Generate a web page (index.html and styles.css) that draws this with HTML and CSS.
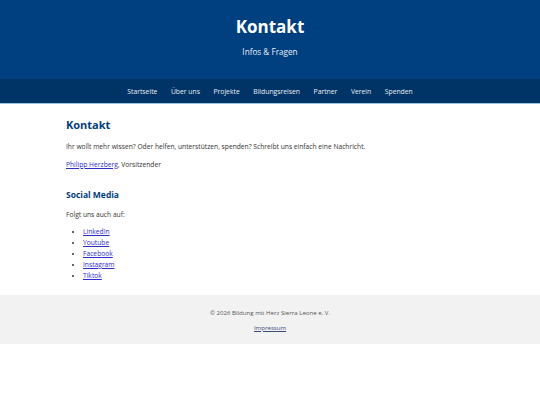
FILE: index.html
```html
<!DOCTYPE html>
<html lang="de">
<head>
<meta charset="utf-8">
<title>Kontakt</title>
<link rel="stylesheet" href="styles.css">
</head>
<body>
<header class="site-header">
  <h1 class="site-title">Kontakt</h1>
  <p class="site-subtitle">Infos &amp; Fragen</p>
</header>
<nav class="main-nav">
  <a href="#">Startseite</a>
  <a href="#">Über uns</a>
  <a href="#">Projekte</a>
  <a href="#">Bildungsreisen</a>
  <a href="#">Partner</a>
  <a href="#">Verein</a>
  <a href="#">Spenden</a>
</nav>
<main class="content">
  <h2 class="section-title">Kontakt</h2>
  <p>Ihr wollt mehr wissen? Oder helfen, unterstützen, spenden? Schreibt uns einfach eine Nachricht.</p>
  <p><a href="#">Philipp Herzberg</a>, Vorsitzender</p>
  <h3 class="sub-title">Social Media</h3>
  <p class="lead-in">Folgt uns auch auf:</p>
  <ul class="social-list">
    <li><a href="#">LinkedIn</a></li>
    <li><a href="#">Youtube</a></li>
    <li><a href="#">Facebook</a></li>
    <li><a href="#">Instagram</a></li>
    <li><a href="#">Tiktok</a></li>
  </ul>
</main>
<footer class="site-footer">
  <p>© 2026 Bildung mit Herz Sierra Leone e. V.</p>
  <p><a href="#">Impressum</a></p>
</footer>
</body>
</html>
```
FILE: styles.css
```css
* { box-sizing: border-box; }
body {
  margin: 0;
  font-family: "Open Sans", "Liberation Sans", sans-serif;
  font-size: 6.7px;
  line-height: 11px;
  color: #333;
  background: #fff;
}
.site-header {
  background: #004080;
  color: #fff;
  text-align: center;
  height: 79px;
  padding-top: 14px;
}
.site-title {
  margin: 0;
  font-size: 17px;
  line-height: 26px;
  font-weight: 700;
}
.site-subtitle {
  margin: 6px 0 0;
  font-size: 8.2px;
  line-height: 12px;
  color: #e6eef7;
}
.main-nav {
  background: #003366;
  border-bottom: 1px solid #9cc3e6;
  height: 25px;
  display: flex;
  justify-content: center;
  align-items: center;
  gap: 13.5px;
}
.main-nav a {
  color: #e8eef5;
  text-decoration: none;
  font-size: 6.8px;
}
.content {
  max-width: 408px;
  margin: 0 auto;
  padding: 13px 0 7px;
}
.content p { margin: 7px 0; }
.content .lead-in { margin-bottom: 6.5px; }
.section-title {
  margin: 0 0 7.5px;
  font-size: 11px;
  line-height: 16px;
  color: #004080;
  font-weight: 700;
}
.sub-title {
  margin: 19.5px 0 7.5px;
  font-size: 8.5px;
  line-height: 12px;
  color: #004080;
  font-weight: 700;
}
.content a { color: #2b2bd0; }
.social-list {
  margin: 6.5px 0 7px;
  padding-left: 17px;
}
.site-footer {
  background: #f2f2f2;
  text-align: center;
  color: #555;
  font-size: 6.1px;
  padding: 11.5px 0;
}
.site-footer p { margin: 0; }
.site-footer p + p { margin-top: 4px; }
.site-footer a { color: #3a4a7a; }
```
